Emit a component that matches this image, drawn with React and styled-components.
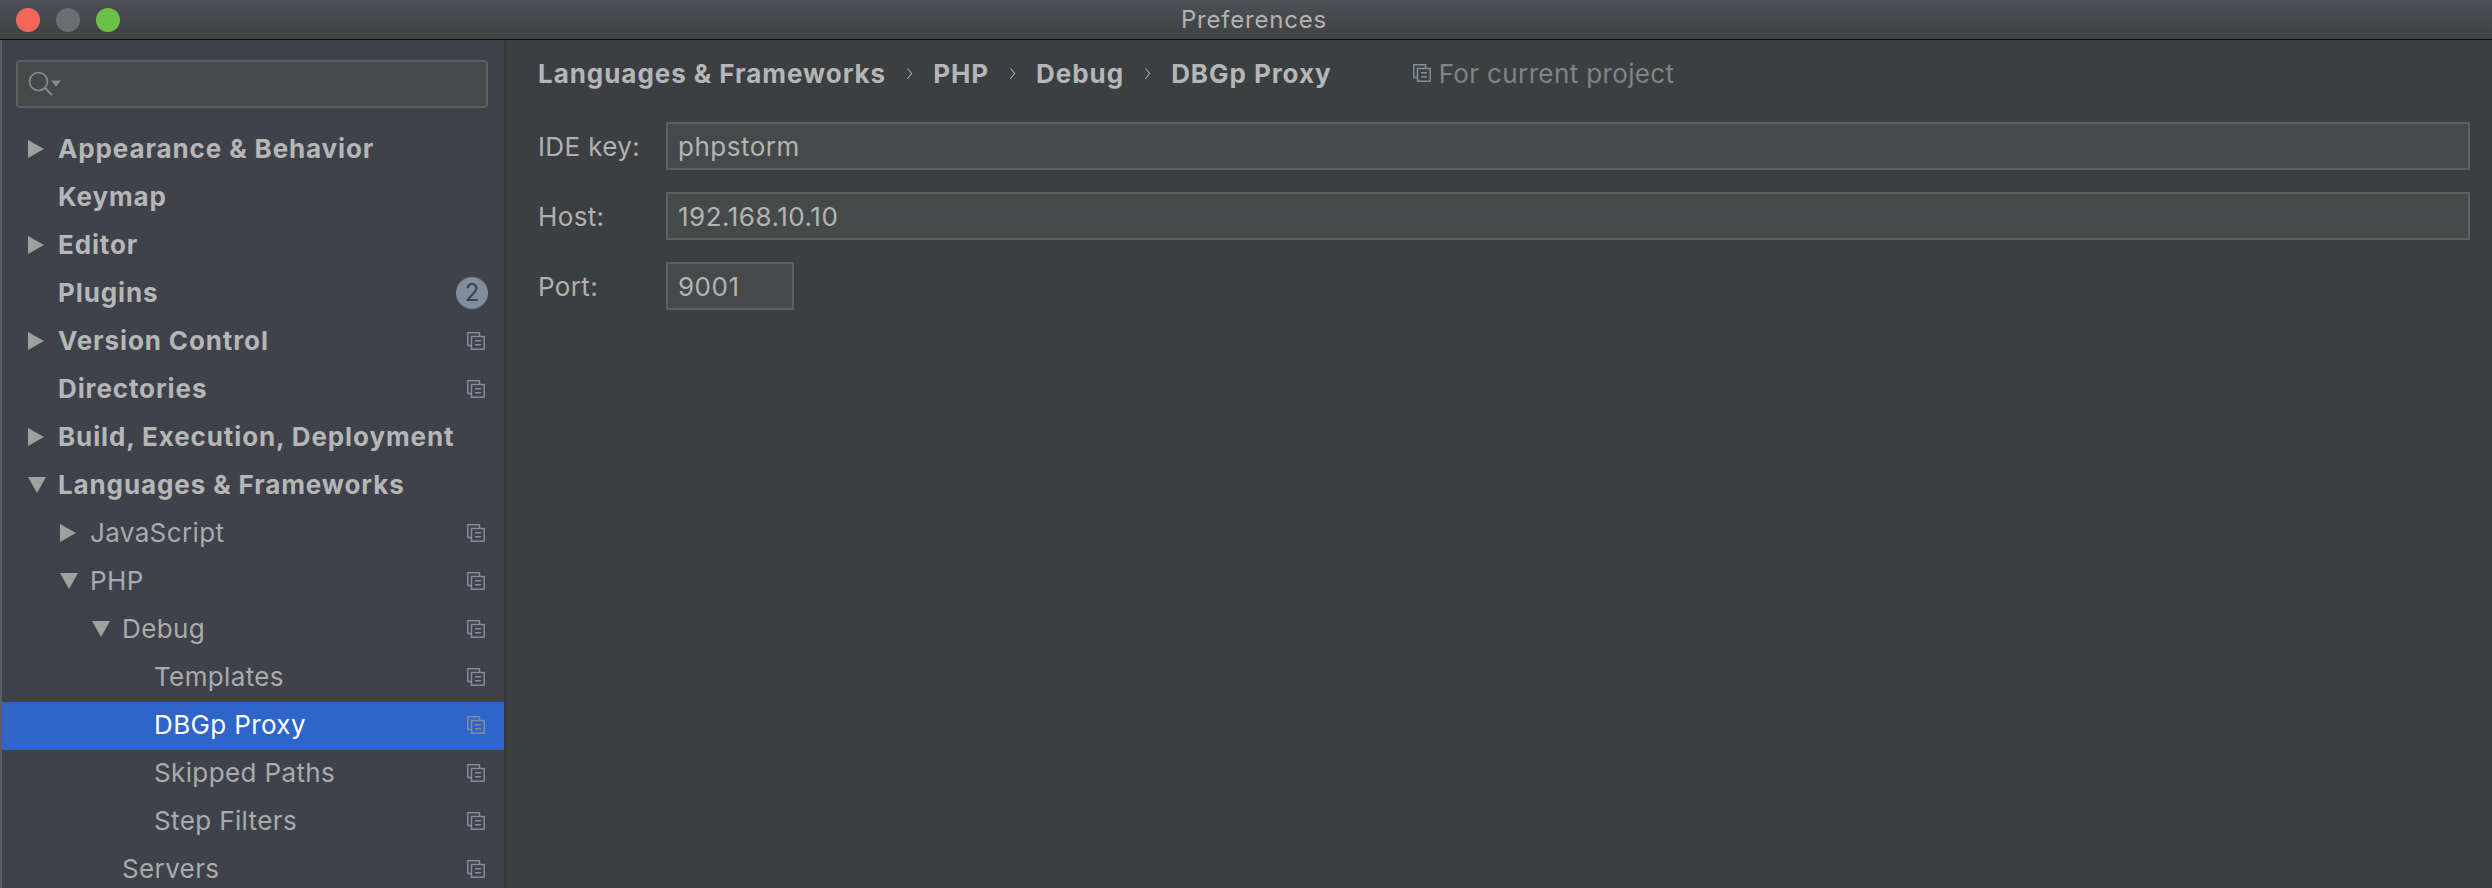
import React from "react";
import styled, { createGlobalStyle } from "styled-components";

const GlobalStyle = createGlobalStyle`
  html, body {
    margin: 0;
    padding: 0;
    height: 100%;
    overflow: hidden;
    background: #3c3f41;
  }
  #root {
    height: 100%;
  }
`;

const tree = [
  { name: "Appearance & Behavior", bold: true, arrow: "right" },
  { name: "Keymap", bold: true },
  { name: "Editor", bold: true, arrow: "right" },
  { name: "Plugins", bold: true, badge: "2" },
  { name: "Version Control", bold: true, arrow: "right", project: true },
  { name: "Directories", bold: true, project: true },
  { name: "Build, Execution, Deployment", bold: true, arrow: "right" },
  { name: "Languages & Frameworks", bold: true, arrow: "down" },
  { name: "JavaScript", depth: 1, arrow: "right", project: true },
  { name: "PHP", depth: 1, arrow: "down", project: true },
  { name: "Debug", depth: 2, arrow: "down", project: true },
  { name: "Templates", depth: 3, project: true },
  { name: "DBGp Proxy", depth: 3, project: true, selected: true },
  { name: "Skipped Paths", depth: 3, project: true },
  { name: "Step Filters", depth: 3, project: true },
  { name: "Servers", depth: 2, project: true },
];

const crumbs = ["Languages & Frameworks", "PHP", "Debug", "DBGp Proxy"];

const Window = styled.div`
  width: 2492px;
  height: 888px;
  display: flex;
  flex-direction: column;
  overflow: hidden;
  font-family: Inter, "Liberation Sans", sans-serif;
`;

const TitleBar = styled.div`
  height: 39px;
  flex: none;
  display: grid;
  grid-template-columns: 1fr auto 1fr;
  align-items: center;
  padding-left: 16px;
  background: linear-gradient(#4c4f54, #3f4144);
  border-bottom: 1px solid #0c0c0c;
`;

const Lights = styled.div`
  display: flex;
  gap: 16px;
`;

const Light = styled.span`
  width: 24px;
  height: 24px;
  border-radius: 50%;
  background: ${(p) => p.$color};
`;

const Title = styled.div`
  font-size: 24px;
  color: #b2b3b4;
  letter-spacing: 0.8px;
`;

const Body = styled.div`
  flex: 1;
  display: flex;
  min-height: 0;
`;

const Sidebar = styled.div`
  width: 504px;
  flex: none;
  background: #3f424a;
  border-left: 2px solid #5b5e63;
  box-sizing: border-box;
  overflow: hidden;
`;

const Search = styled.div`
  height: 48px;
  margin: 20px 16px 18px 14px;
  box-sizing: border-box;
  display: flex;
  align-items: center;
  padding-left: 10px;
  background: #45494a;
  border: 2px solid #5e6060;
  border-radius: 4px;
`;

const Row = styled.div`
  height: 48px;
  display: flex;
  align-items: center;
  box-sizing: border-box;
  padding: 0 16px 3px ${(p) => 26 + (p.$depth || 0) * 32}px;
  background: ${(p) => (p.$selected ? "#2f65ca" : "transparent")};
  color: ${(p) => (p.$selected ? "#ffffff" : p.$bold ? "#b5b6b7" : "#a9abad")};
  font-size: 26px;
  font-weight: ${(p) => (p.$bold ? 700 : 400)};
  letter-spacing: ${(p) => (p.$bold ? "0.88px" : "0.37px")};
`;

const ArrowSlot = styled.span`
  width: 30px;
  flex: none;
  display: flex;
  align-items: center;
`;

const RowLabel = styled.span`
  flex: 1;
  white-space: nowrap;
`;

const ProjectSlot = styled.span`
  width: 20px;
  display: flex;
  justify-content: flex-end;
  margin-right: 3px;
`;

const Badge = styled.span`
  width: 32px;
  height: 32px;
  border-radius: 50%;
  background: #808e9b;
  color: #3f424a;
  font-size: 24px;
  font-weight: 400;
  letter-spacing: 0;
  display: flex;
  align-items: center;
  justify-content: center;
`;

const Main = styled.div`
  flex: 1;
  background: #3c3f41;
  border-left: 3px solid #363938;
  padding: 0 22px 0 31px;
  display: flex;
  flex-direction: column;
`;

const Breadcrumbs = styled.div`
  height: 66px;
  margin-bottom: 16px;
  display: flex;
  align-items: center;
  font-size: 26px;
  font-weight: 700;
  letter-spacing: 0.95px;
  color: #b5b6b7;
`;

const Chevron = styled.svg`
  width: 7px;
  height: 13px;
  margin: 0 20px;
`;

const Scope = styled.span`
  display: flex;
  align-items: center;
  gap: 8px;
  margin-left: 81px;
  font-weight: 400;
  letter-spacing: 0.37px;
  color: #818385;
`;

const Form = styled.div`
  display: grid;
  grid-template-columns: 128px 1fr;
  row-gap: 22px;
  align-items: center;
`;

const FieldLabel = styled.label`
  font-size: 26px;
  letter-spacing: 0.37px;
  white-space: nowrap;
  color: #b0b1b2;
`;

const Field = styled.div`
  height: 48px;
  width: ${(p) => p.$width || "auto"};
  box-sizing: border-box;
  display: flex;
  align-items: center;
  padding-left: 10px;
  background: #45494a;
  border: 2px solid #5e6060;
  font-size: 26px;
  letter-spacing: 0.5px;
  color: #b3b4b5;
`;

const ArrowIcon = ({ dir }) =>
  dir === "down" ? (
    <svg width="18" height="16" viewBox="0 0 18 16">
      <path d="M0 0H18L9 16Z" fill="#a0a0a0" />
    </svg>
  ) : (
    <svg width="16" height="18" viewBox="0 0 16 18">
      <path d="M0 0L16 9L0 18Z" fill="#a0a0a0" />
    </svg>
  );

const ProjectIcon = () => (
  <svg width="18" height="18" viewBox="0 0 18 18" fill="none" stroke="#808e9b" strokeWidth="1.5">
    <path d="M12.5 4V0.8H0.8V13.5H4.5" />
    <rect x="4.5" y="4.5" width="12.7" height="12.7" />
    <path d="M8 8.7H14M8 12.7H14" />
  </svg>
);

const SearchIcon = () => (
  <svg width="34" height="26" viewBox="0 0 34 26" fill="none">
    <circle cx="10.5" cy="10.5" r="9" stroke="#808e9b" strokeWidth="1.6" />
    <path d="M17 17L24 24" stroke="#808e9b" strokeWidth="2" />
    <path d="M23 9.5H33L28 15.5Z" fill="#808e9b" />
  </svg>
);

const App = () => (
  <Window>
    <GlobalStyle />
    <TitleBar>
      <Lights>
        <Light $color="#f3665a" />
        <Light $color="#6b6e72" />
        <Light $color="#6cc045" />
      </Lights>
      <Title>Preferences</Title>
    </TitleBar>
    <Body>
      <Sidebar>
        <Search>
          <SearchIcon />
        </Search>
        {tree.map((item) => (
          <Row key={item.name} $depth={item.depth} $bold={item.bold} $selected={item.selected}>
            <ArrowSlot>{item.arrow && <ArrowIcon dir={item.arrow} />}</ArrowSlot>
            <RowLabel>{item.name}</RowLabel>
            {item.badge && <Badge>{item.badge}</Badge>}
            {item.project && (
              <ProjectSlot>
                <ProjectIcon />
              </ProjectSlot>
            )}
          </Row>
        ))}
      </Sidebar>
      <Main>
        <Breadcrumbs>
          {crumbs.map((crumb, i) => (
            <React.Fragment key={crumb}>
              {i > 0 && (
                <Chevron viewBox="0 0 8 14" fill="none" stroke="#a9abad" strokeWidth="1.2">
                  <path d="M1.5 1L6.5 7L1.5 13" />
                </Chevron>
              )}
              <span>{crumb}</span>
            </React.Fragment>
          ))}
          <Scope>
            <ProjectIcon />
            For current project
          </Scope>
        </Breadcrumbs>
        <Form>
          <FieldLabel>IDE key:</FieldLabel>
          <Field>phpstorm</Field>
          <FieldLabel>Host:</FieldLabel>
          <Field>192.168.10.10</Field>
          <FieldLabel>Port:</FieldLabel>
          <Field $width="128px">9001</Field>
        </Form>
      </Main>
    </Body>
  </Window>
);

export default App;
